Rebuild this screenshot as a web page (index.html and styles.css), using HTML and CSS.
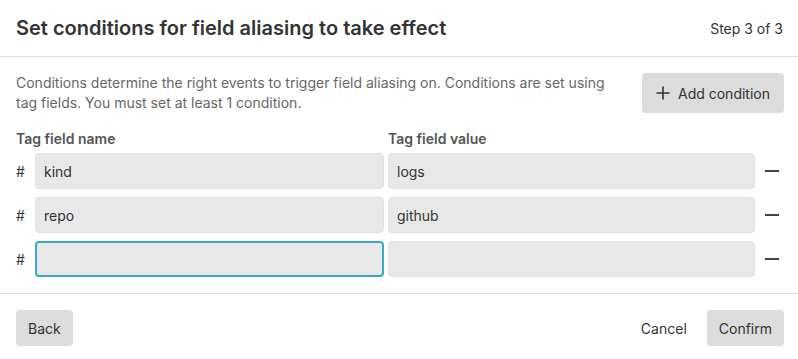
FILE: index.html
```html
<!DOCTYPE html>
<html lang="en">
<head>
<meta charset="UTF-8">
<meta name="viewport" content="width=device-width, initial-scale=1.0">
<title>Field aliasing</title>
<link rel="stylesheet" href="styles.css">
</head>
<body>

<div class="modal">
    <div class="modal-header">
        <h2>Set conditions for field aliasing to take effect</h2>
        <span class="step">Step 3 of 3</span>
    </div>

    <div class="modal-body">
        <div class="intro">
            <p class="desc">Conditions determine the right events to trigger field aliasing on. Conditions are set using tag fields. You must set at least 1 condition.</p>
            <button class="btn btn-add">
                <svg width="14" height="14" viewBox="0 0 14 14"><path d="M7 0.5v13M0.5 7h13" stroke="#333" stroke-width="1.6" fill="none"/></svg>
                Add condition
            </button>
        </div>

        <div class="grid labels">
            <label class="name-label">Tag field name</label>
            <label>Tag field value</label>
            <span></span>
        </div>

        <div class="grid row">
            <span class="hash">#</span>
            <input type="text" value="kind">
            <input type="text" value="logs">
            <span class="remove"></span>
        </div>
        <div class="grid row">
            <span class="hash">#</span>
            <input type="text" value="repo">
            <input type="text" value="github">
            <span class="remove"></span>
        </div>
        <div class="grid row">
            <span class="hash">#</span>
            <input type="text" class="focused">
            <input type="text">
            <span class="remove"></span>
        </div>
    </div>

    <div class="modal-footer">
        <button class="btn">Back</button>
        <div class="right">
            <button class="btn btn-plain">Cancel</button>
            <button class="btn">Confirm</button>
        </div>
    </div>
</div>

</body>
</html>
```

FILE: styles.css
```css
body {
    font-family: Inter, "Noto Sans", sans-serif;
    margin: 0;
    padding: 0;
    background: #fff;
    color: #333;
}

.modal {
    width: 798px;
}

.modal-header {
    display: flex;
    align-items: center;
    justify-content: space-between;
    height: 56px;
    padding: 0 15px 0 16px;
    border-bottom: 1px solid #dcdcdc;
}

.modal-header h2 {
    margin: 0;
    font-size: 20px;
    font-weight: 600;
    color: #333;
}

.step {
    font-size: 14px;
    color: #333;
}

.modal-body {
    padding: 16px 14px 16px 16px;
}

.intro {
    display: flex;
    align-items: flex-start;
    gap: 28px;
}

.desc {
    flex: 1;
    margin: 0;
    font-size: 14px;
    line-height: 20px;
    color: #666;
}

.btn {
    font-family: inherit;
    font-size: 14px;
    color: #333;
    background: #dcdcdc;
    border: none;
    border-radius: 4px;
    height: 36px;
    padding: 0 12px;
    white-space: nowrap;
    cursor: pointer;
}

.btn-add {
    display: flex;
    align-items: center;
    gap: 8px;
    height: 40px;
    padding: 0 14px;
}

.btn-plain {
    background: none;
    padding: 0 8px;
}

.grid {
    display: grid;
    grid-template-columns: 15px 349px 367px 25px;
    column-gap: 4px;
    align-items: center;
}

.labels {
    margin-top: 16px;
    margin-bottom: 4px;
}

.labels label {
    font-size: 14px;
    font-weight: 600;
    line-height: 20px;
    color: #555;
}

.labels .name-label {
    grid-column: 1 / 3;
}

.row {
    margin-bottom: 8px;
}

.row:last-child {
    margin-bottom: 0;
}

.hash {
    font-size: 14px;
    color: #333;
}

.row input {
    font-family: inherit;
    font-size: 14px;
    color: #333;
    height: 36px;
    box-sizing: border-box;
    padding: 0 8px;
    background: #e8e8e8;
    border: 1px solid #e2e2e2;
    border-radius: 4px;
    outline: none;
}

.row input.focused {
    border: 2px solid #3ba9c4;
    padding: 0 7px;
}

.remove {
    display: block;
    justify-self: center;
    width: 14px;
    height: 2px;
    background: #444;
}

.modal-footer {
    display: flex;
    justify-content: space-between;
    align-items: center;
    border-top: 1px solid #dcdcdc;
    padding: 16px 14px 16px 16px;
}

.modal-footer .right {
    display: flex;
    gap: 12px;
}
```
